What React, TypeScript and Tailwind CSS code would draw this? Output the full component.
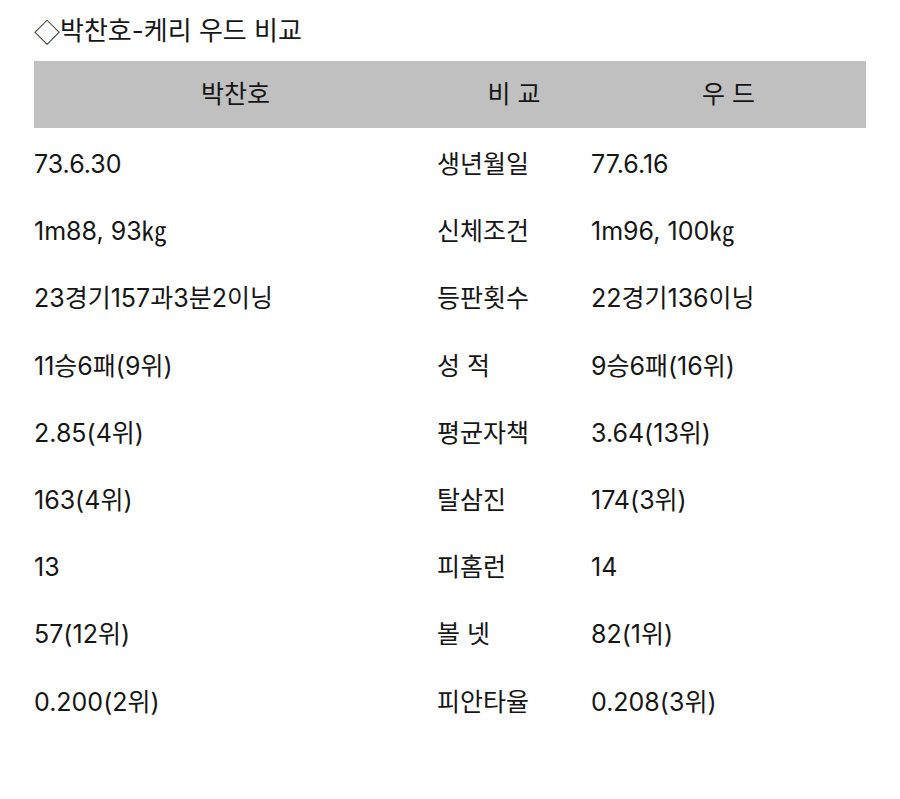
const rows: [string, string, string][] = [
  ["73.6.30", "생년월일", "77.6.16"],
  ["1m88, 93㎏", "신체조건", "1m96, 100㎏"],
  ["23경기157과3분2이닝", "등판횟수", "22경기136이닝"],
  ["11승6패(9위)", "성 적", "9승6패(16위)"],
  ["2.85(4위)", "평균자책", "3.64(13위)"],
  ["163(4위)", "탈삼진", "174(3위)"],
  ["13", "피홈런", "14"],
  ["57(12위)", "볼 넷", "82(1위)"],
  ["0.200(2위)", "피안타율", "0.208(3위)"],
];

export default function App() {
  return (
    <div className="min-h-[799px] bg-white px-[34px] font-['Inter','Noto_Sans_CJK_KR',sans-serif] text-[25px] leading-none text-[#161616]">
      <h1 className="flex h-[61px] items-center text-[26px] font-normal">
        <span className="font-['Noto_Sans_CJK_KR',sans-serif] font-light">◇</span>
        박찬호-케리 우드 비교
      </h1>

      <div className="grid h-[67px] w-[832px] grid-cols-[403px_154px_275px] items-center bg-[#c0c0c0] text-center">
        <div>박찬호</div>
        <div>비 교</div>
        <div>우 드</div>
      </div>

      <div className="mt-[3px] w-[832px]">
        {rows.map(([park, label, wood]) => (
          <div key={label} className="grid h-[67.2px] grid-cols-[403px_154px_275px] items-center">
            <div>{park}</div>
            <div>{label}</div>
            <div>{wood}</div>
          </div>
        ))}
      </div>
    </div>
  );
}
